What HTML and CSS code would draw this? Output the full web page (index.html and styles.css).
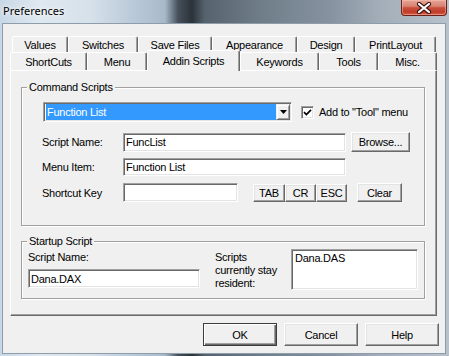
FILE: index.html
```html
<!DOCTYPE html>
<html>
<head>
<meta charset="utf-8">
<title>Preferences</title>
<link rel="stylesheet" href="styles.css">
</head>
<body>
<div class="window">
  <div class="titlebar">
    <span class="title">Preferences</span>
    <div class="close">
      <svg width="16" height="12" viewBox="0 0 16 12">
        <path d="M3 2 L13 10 M13 2 L3 10" stroke="#3a1410" stroke-width="4.2" stroke-linecap="round" fill="none"/>
        <path d="M3 2 L13 10 M13 2 L3 10" stroke="#fff" stroke-width="2.2" stroke-linecap="round" fill="none"/>
      </svg>
    </div>
  </div>
  <div class="client">
    <div class="tabctl">
      <div class="tabrow back">
        <div class="tab t-values">Values</div>
        <div class="tab t-switches">Switches</div>
        <div class="tab t-save">Save Files</div>
        <div class="tab t-appear">Appearance</div>
        <div class="tab t-design">Design</div>
        <div class="tab t-print">PrintLayout</div>
      </div>
      <div class="tabrow front">
        <div class="tab t-short">ShortCuts</div>
        <div class="tab t-menu">Menu</div>
        <div class="tab t-addin selected">Addin Scripts</div>
        <div class="tab t-keys">Keywords</div>
        <div class="tab t-tools">Tools</div>
        <div class="tab t-misc">Misc.</div>
      </div>
      <div class="panel">
        <div class="group cmd">
          <span class="group-title">Command Scripts</span>
          <div class="row r1">
            <div class="combo">
              <span class="combo-value">Function List</span>
              <span class="combo-btn">
                <svg width="7" height="4" viewBox="0 0 7 4"><path d="M0 0 H7 L3.5 4 Z" fill="#000"/></svg>
              </span>
            </div>
            <div class="check">
              <span class="box">
                <svg width="9" height="9" viewBox="0 0 9 9"><path d="M1 4.2 L3.4 6.6 L8 1.8" stroke="#000" stroke-width="1.7" fill="none"/></svg>
              </span>
              <span>Add to "Tool" menu</span>
            </div>
          </div>
          <div class="row r2">
            <span class="lbl">Script Name:</span>
            <div class="field f-name">FuncList</div>
            <button class="btn browse">Browse...</button>
          </div>
          <div class="row r3">
            <span class="lbl">Menu Item:</span>
            <div class="field f-name">Function List</div>
          </div>
          <div class="row r4">
            <span class="lbl">Shortcut Key</span>
            <div class="field f-key"></div>
            <div class="keybtns">
              <button class="btn k-tab">TAB</button>
              <button class="btn k-cr">CR</button>
              <button class="btn k-esc">ESC</button>
            </div>
            <button class="btn clear">Clear</button>
          </div>
        </div>
        <div class="group startup">
          <span class="group-title">Startup Script</span>
          <div class="sleft">
            <span class="slabel">Script Name:</span>
            <div class="field f-start">Dana.DAX</div>
          </div>
          <div class="snote">Scripts<br>currently stay<br>resident:</div>
          <div class="field slist">Dana.DAS</div>
        </div>
      </div>
    </div>
    <div class="actions">
      <button class="btn act default">OK</button>
      <button class="btn act">Cancel</button>
      <button class="btn act">Help</button>
    </div>
  </div>
</div>
</body>
</html>
```

FILE: styles.css
```css
html, body {
  margin: 0;
  padding: 0;
}
body {
  width: 449px;
  height: 356px;
  overflow: hidden;
  background: linear-gradient(90deg, #c9d8e6 0, #dfe8f0 40px, #d6e1ea 90px, #bccbda 130px, #a8b9c9 165px, #46505a 178px, #2b3239 192px, #56636e 205px, #6f7d89 260px, #8692a0 330px, #a3aeb9 380px, #b8c1ca 449px);
  font-family: "Liberation Sans", Arial, sans-serif;
  font-size: 11px;
  letter-spacing: -0.25px;
  color: #000;
}
.window {
  display: flex;
  flex-direction: column;
  height: 356px;
}
.titlebar {
  height: 23px;
  flex: none;
  display: flex;
  align-items: flex-start;
  justify-content: space-between;
}
.title {
  font-family: "Noto Sans", sans-serif;
  font-size: 11px;
  letter-spacing: 0;
  line-height: 15px;
  margin: 3px 0 0 3px;
  color: #000;
  text-shadow: 0 0 6px rgba(255,255,255,0.9), 0 0 3px rgba(255,255,255,0.9);
}
.close {
  width: 46px;
  height: 16px;
  margin-right: 2px;
  box-sizing: border-box;
  border: 1px solid #6b2219;
  border-top: none;
  border-radius: 0 0 4px 4px;
  background: linear-gradient(#e4a596 0, #d98575 40%, #c8503d 52%, #c13c28 80%, #d8634a 100%);
  box-shadow: inset 0 0 0 1px rgba(255,200,190,0.45);
  display: flex;
  align-items: center;
  justify-content: center;
}
.client {
  flex: none;
  height: 331px;
  margin: 0 3px 0 2px;
  box-sizing: border-box;
  border: 1px solid #8e9dab;
  background: #f0f0f0;
  display: flex;
  flex-direction: column;
}
.tabctl {
  margin: 12px 0 0 7px;
  width: 427px;
}
.tabrow {
  display: flex;
  align-items: flex-start;
}
.tabrow.back {
  margin-left: 2px;
  height: 16px;
}
.tabrow.front {
  height: 18px;
}
.tab {
  box-sizing: border-box;
  flex: none;
  background: #f0f0f0;
  border-top: 1px solid #fff;
  border-left: 1px solid #fff;
  border-right: 1px solid #696969;
  box-shadow: inset -1px 0 0 #a0a0a0;
  border-radius: 2px 2px 0 0;
  display: flex;
  align-items: center;
  justify-content: center;
  white-space: nowrap;
}
.back .tab { height: 16px; }
.front .tab { height: 18px; }
.front .tab.selected {
  position: relative;
  z-index: 1;
  margin-top: -2px;
  height: 21px;
  padding-bottom: 1px;
}
.t-values { width: 56px; }
.t-switches { width: 70px; }
.t-save { width: 74px; }
.t-appear { width: 85px; }
.t-design { width: 58px; }
.t-print { width: 81px; }
.t-short { width: 77px; }
.t-menu { width: 60px; }
.t-addin { width: 93px; }
.t-keys { width: 79px; }
.t-tools { width: 59px; }
.t-misc { width: 59px; }

.panel {
  box-sizing: border-box;
  height: 246px;
  border: 1px solid;
  border-color: #fff #696969 #696969 #fff;
  box-shadow: inset -1px -1px 0 #a0a0a0;
  padding: 16px 0 0 10px;
}
.group {
  position: relative;
  box-sizing: border-box;
  width: 404px;
  border: 1px solid #a0a0a0;
  box-shadow: inset 1px 1px 0 #fff, 1px 1px 0 #fff;
}
.group-title {
  position: absolute;
  top: -7px;
  left: 5px;
  padding: 0 2px;
  line-height: 13px;
  background: #f0f0f0;
  white-space: nowrap;
}
.cmd {
  height: 139px;
  padding-left: 20px;
}
.row {
  display: flex;
  align-items: center;
}
.r1 { margin-top: 14px; height: 20px; }
.r2 { margin-top: 10px; height: 20px; }
.r3 { margin-top: 6px; height: 18px; }
.r4 { margin-top: 7px; height: 19px; }
.lbl {
  width: 81px;
  flex: none;
  white-space: nowrap;
}
.combo {
  box-sizing: border-box;
  margin-left: 1px;
  width: 249px;
  height: 20px;
  background: #fff;
  border: 1px solid;
  border-color: #a0a0a0 #fff #fff #a0a0a0;
  box-shadow: inset 1px 1px 0 #696969, inset -1px -1px 0 #e3e3e3;
  padding: 1px 1px 1px 2px;
  display: flex;
}
.combo-value {
  flex: 1;
  background: #3399ff;
  color: #fff;
  padding-left: 1px;
  display: flex;
  align-items: center;
  white-space: nowrap;
}
.combo-btn {
  box-sizing: border-box;
  width: 14px;
  background: #f0f0f0;
  border: 1px solid;
  border-color: #f0f0f0 #696969 #696969 #f0f0f0;
  box-shadow: inset 1px 1px 0 #fff, inset -1px -1px 0 #a0a0a0;
  display: flex;
  align-items: center;
  justify-content: center;
}
.check {
  margin-left: 9px;
  display: flex;
  align-items: center;
  gap: 5px;
  white-space: nowrap;
}
.box {
  box-sizing: border-box;
  width: 13px;
  height: 13px;
  background: #fff;
  border: 1px solid;
  border-color: #a0a0a0 #fff #fff #a0a0a0;
  box-shadow: inset 1px 1px 0 #696969, inset -1px -1px 0 #e3e3e3;
  display: flex;
  align-items: center;
  justify-content: center;
}
.field {
  box-sizing: border-box;
  background: #fff;
  border: 1px solid;
  border-color: #a0a0a0 #fff #fff #a0a0a0;
  box-shadow: inset 1px 1px 0 #696969, inset -1px -1px 0 #e3e3e3;
  padding: 0 2px;
  display: flex;
  align-items: center;
  white-space: nowrap;
  flex: none;
}
.f-name { width: 223px; height: 19px; }
.r3 .f-name { height: 18px; }
.f-key { width: 115px; height: 19px; }
.btn {
  box-sizing: border-box;
  font: inherit;
  letter-spacing: inherit;
  color: #000;
  background: #f0f0f0;
  border: 1px solid;
  border-color: #fff #696969 #696969 #fff;
  box-shadow: inset -1px -1px 0 #a0a0a0, inset 1px 1px 0 #e3e3e3;
  padding: 0;
  margin: 0;
  flex: none;
}
.browse { margin-left: 5px; width: 59px; height: 20px; }
.keybtns {
  display: flex;
  margin-left: 15px;
}
.keybtns .btn { height: 18px; }
.k-tab { width: 32px; }
.k-cr { width: 31px; }
.k-esc { width: 31px; }
.clear { margin-left: 10px; width: 45px; height: 19px; }

.startup {
  height: 58px;
  margin-top: 15px;
  padding-left: 6px;
  display: flex;
  align-items: flex-start;
}
.sleft {
  width: 172px;
  display: flex;
  flex-direction: column;
}
.slabel {
  margin-top: 9px;
  line-height: 13px;
}
.f-start {
  margin-top: 5px;
  width: 172px;
  height: 19px;
}
.snote {
  margin: 9px 0 0 15px;
  width: 76px;
  line-height: 13px;
  white-space: nowrap;
}
.slist {
  margin-top: 7px;
  width: 127px;
  height: 41px;
  align-items: flex-start;
  padding: 2px 3px;
  line-height: 13px;
}
.actions {
  display: flex;
  justify-content: flex-end;
  gap: 7px;
  margin-top: 7px;
  padding-right: 6px;
}
.act {
  width: 74px;
  height: 23px;
}
.act.default {
  border: 1px solid #3c3c3c;
  box-shadow: inset 1px 1px 0 #fff, inset -1px -1px 0 #696969, inset -2px -2px 0 #a0a0a0;
}
```
